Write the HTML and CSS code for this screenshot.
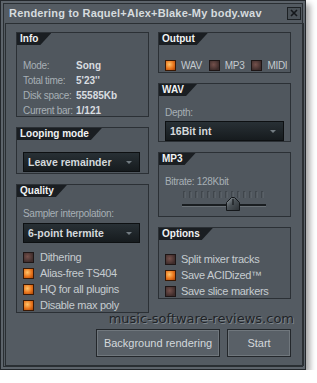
FILE: index.html
```html
<!DOCTYPE html>
<html lang="en">
<head>
  <meta charset="UTF-8">
  <meta name="viewport" content="width=device-width,initial-scale=1.0">
  <title>Rendering</title>
  <link rel="stylesheet" href="styles.css">
</head>
<body>

<div class="window">
  <div class="titlebar">
    <span class="title">Rendering to Raquel+Alex+Blake-My body.wav</span>
    <span class="close">
      <svg width="8" height="8" viewBox="0 0 8 8"><path d="M1 1L7 7M7 1L1 7" stroke="#15181b" stroke-width="1.6"/></svg>
    </span>
  </div>

  <div class="panel">
    <div class="columns">
      <div class="col">
        <section class="group info">
          <div class="tab">Info</div>
          <div class="info-grid">
            <span class="lbl">Mode:</span><span class="val">Song</span>
            <span class="lbl">Total time:</span><span class="val">5'23''</span>
            <span class="lbl">Disk space:</span><span class="val">55585Kb</span>
            <span class="lbl">Current bar:</span><span class="val">1/121</span>
          </div>
        </section>

        <section class="group looping">
          <div class="tab">Looping mode</div>
          <div class="select">Leave remainder</div>
        </section>

        <section class="group quality">
          <div class="tab">Quality</div>
          <div class="lbl caption">Sampler interpolation:</div>
          <div class="select">6-point hermite</div>
          <ul class="checks">
            <li><span class="cb"></span>Dithering</li>
            <li><span class="cb on"></span>Alias-free TS404</li>
            <li><span class="cb on"></span>HQ for all plugins</li>
            <li><span class="cb on"></span>Disable max poly</li>
          </ul>
        </section>
      </div>

      <div class="col">
        <section class="group output">
          <div class="tab">Output</div>
          <div class="formats">
            <span class="fmt"><span class="cb on"></span>WAV</span>
            <span class="fmt"><span class="cb"></span>MP3</span>
            <span class="fmt"><span class="cb"></span>MIDI</span>
          </div>
        </section>

        <section class="group wav">
          <div class="tab">WAV</div>
          <div class="lbl caption">Depth:</div>
          <div class="select">16Bit int</div>
        </section>

        <section class="group mp3">
          <div class="tab">MP3</div>
          <div class="lbl caption">Bitrate: 128Kbit</div>
          <svg class="slider" width="92" height="22" viewBox="0 0 92 22">
            <defs>
              <linearGradient id="thumb" x1="0" y1="0" x2="1" y2="1">
                <stop offset="0" stop-color="#9aa2a8"/>
                <stop offset="0.45" stop-color="#4a5156"/>
                <stop offset="1" stop-color="#2b3034"/>
              </linearGradient>
            </defs>
            <path d="M4 1v7M10 1v7M16 1v7M22 1v7M28 1v7M34 1v7M40 1v7M46 1v7M52 1v7M58 1v7M64 1v7M70 1v7M76 1v7M82 1v7" stroke="#30363b" stroke-width="1"/>
            <path d="M5 2v6M11 2v6M17 2v6M23 2v6M29 2v6M35 2v6M41 2v6M47 2v6M53 2v6M59 2v6M65 2v6M71 2v6M77 2v6M83 2v6" stroke="#656c72" stroke-width="1"/>
            <rect x="2" y="14" width="84" height="2" fill="#1a1e21"/>
            <rect x="2" y="16" width="84" height="1" fill="#6a7177"/>
            <path d="M46.5 20.5V12.5L51.5 7.5H54.5L59.5 12.5V20.5Z" fill="url(#thumb)" stroke="#15181b"/>
            <path d="M53 9V15" stroke="#15181b" stroke-width="1.2"/>
          </svg>
        </section>

        <section class="group options">
          <div class="tab">Options</div>
          <ul class="checks">
            <li><span class="cb"></span>Split mixer tracks</li>
            <li><span class="cb on"></span>Save ACIDized™</li>
            <li><span class="cb"></span>Save slice markers</li>
          </ul>
        </section>
      </div>
    </div>

    <div class="watermark">music-software-reviews.com</div>

    <div class="buttons">
      <button class="btn btn-bg">Background rendering</button>
      <button class="btn btn-start">Start</button>
    </div>
  </div>
</div>

</body>
</html>
```

FILE: styles.css
```css
body {
  margin: 0;
  background: #fff;
  font-family: "Liberation Sans", Arial, sans-serif;
  white-space: nowrap;
}
.window {
  width: 306px;
  height: 370px;
  box-sizing: border-box;
  display: flex;
  flex-direction: column;
  padding: 2px 1px 3px 4px;
  background: #545b62;
  border: 1px solid #24282c;
  box-shadow: inset 0 0 0 2px #5d646b, inset 0 0 0 3px #2a2f33, 4px 4px 6px rgba(0,0,0,0.35);
}
.titlebar {
  height: 20px;
  display: flex;
  align-items: center;
  justify-content: space-between;
  padding-left: 4px;
}
.title {
  font-weight: bold;
  font-size: 11px;
  letter-spacing: 0.2px;
  color: #d6dbde;
}
.close {
  width: 14px;
  height: 13px;
  box-sizing: border-box;
  margin-right: 3px;
  border: 1px solid #1d2124;
  background: #4b5258;
  display: flex;
  align-items: center;
  justify-content: center;
}
.panel {
  flex: 1;
  border: 1px solid #2a2f33;
  padding: 8px 12px 0 10px;
  display: flex;
  flex-direction: column;
}
.columns {
  display: flex;
  gap: 9px;
}
.col {
  width: 133px;
  display: flex;
  flex-direction: column;
  gap: 10px;
}
.group {
  box-sizing: border-box;
  border: 1px solid #2b3035;
  background: #50575e;
}
.tab {
  display: inline-block;
  height: 12px;
  line-height: 12px;
  padding: 0 13px 0 3px;
  background: #1a1e22;
  color: #f0f2f3;
  font-weight: bold;
  font-size: 10px;
  clip-path: polygon(0 0, 100% 0, calc(100% - 11px) 100%, 0 100%);
  vertical-align: top;
}
.lbl {
  font-size: 10px;
  letter-spacing: -0.3px;
  color: #a7afb5;
}
.caption {
  height: 14px;
  line-height: 14px;
  margin: 4px 0 0 6px;
}

.info { height: 85px; }
.info-grid {
  display: grid;
  grid-template-columns: 53px auto;
  grid-auto-rows: 15px;
  align-items: center;
  margin: 7px 0 0 6px;
}
.val {
  font-weight: bold;
  font-size: 10px;
  color: #d9dde0;
}

.select {
  position: relative;
  box-sizing: border-box;
  height: 20px;
  line-height: 18px;
  padding-left: 4px;
  border: 1px solid #0d1012;
  background: linear-gradient(#283035, #161b1e);
  color: #d4d9dc;
  font-weight: bold;
  font-size: 10.5px;
}
.select::after {
  content: "";
  position: absolute;
  right: 7px;
  top: 8px;
  border-left: 3px solid transparent;
  border-right: 3px solid transparent;
  border-top: 3px solid #737c82;
}
.looping { height: 47px; }
.looping .select { margin: 6px 8px 0 6px; }
.quality { height: 129px; }
.quality .select { margin: 2px 8px 0 6px; }
.wav { height: 59px; }
.wav .select { margin: 1px 6px 0 6px; }

.checks {
  list-style: none;
  margin: 6px 0 0 6px;
  padding: 0;
}
.checks li {
  height: 16px;
  display: flex;
  align-items: center;
  gap: 6px;
  font-size: 11px;
  letter-spacing: -0.3px;
  color: #c6ccd0;
}
.cb {
  flex: none;
  display: inline-block;
  width: 11px;
  height: 11px;
  box-sizing: border-box;
  border: 1px solid #1e1616;
  background: radial-gradient(circle at 40% 40%, #75514c, #3e2c2b 75%);
}
.cb.on {
  border-color: #3a1a06;
  background: radial-gradient(circle at 38% 38%, #ffc46a, #e8741c 55%, #a94406);
}

.output { height: 41px; }
.formats {
  display: flex;
  gap: 7px;
  margin: 7px 0 0 6px;
  height: 14px;
}
.fmt {
  display: flex;
  align-items: center;
  gap: 5px;
  font-size: 10px;
  letter-spacing: -0.3px;
  color: #c4cace;
}

.mp3 { height: 65px; }
.slider {
  display: block;
  margin: 1px 0 0 21px;
}
.options { height: 72px; }
.options .checks { margin-top: 5px; }
.options .checks li { gap: 5px; }

.watermark {
  align-self: flex-end;
  margin: -1px -3px 0 0;
  height: 14px;
  line-height: 14px;
  font-family: "DejaVu Sans", sans-serif;
  font-size: 13px;
  color: #1f2327;
  text-shadow: 1px 1px 0 #7d858b;
}
.buttons {
  display: flex;
  justify-content: flex-end;
  gap: 7px;
  margin-top: 3px;
}
.btn {
  height: 28px;
  box-sizing: border-box;
  border: 1px solid #23272b;
  box-shadow: inset 0 0 0 1px #70777d;
  background: #596067;
  color: #d3d8dc;
  font-family: "Liberation Sans", Arial, sans-serif;
  font-size: 11px;
  padding: 0;
}
.btn-bg { width: 124px; }
.btn-start { width: 64px; }
```
